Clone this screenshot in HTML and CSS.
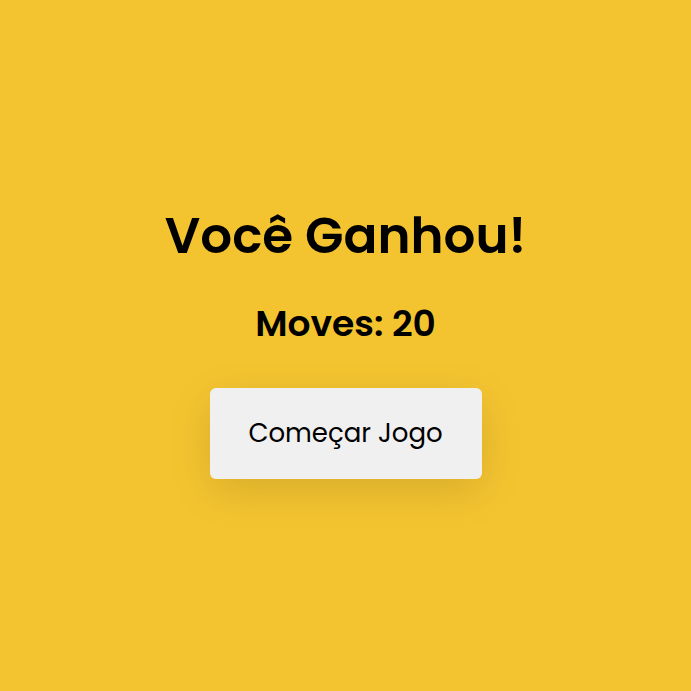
FILE: index.html
```html
<!DOCTYPE html>
<html lang="pt">
<head>
<meta charset="utf-8">
<title>Você Ganhou!</title>
<link rel="stylesheet" href="styles.css">
</head>
<body>
<main class="screen">
  <h1 class="title">Você Ganhou!</h1>
  <h2 class="moves">Moves: 20</h2>
  <button class="start">Começar Jogo</button>
</main>
</body>
</html>
```
FILE: styles.css
```css
* { box-sizing: border-box; }
html, body { margin: 0; padding: 0; }
body {
  background: #f4c430;
  font-family: Poppins, "Open Sans", "Noto Sans", sans-serif;
  color: #000;
}
.screen {
  height: 100vh;
  padding-bottom: 14px;
  display: flex;
  flex-direction: column;
  align-items: center;
  justify-content: center;
}
.title {
  margin: 0;
  font-size: 50px;
  font-weight: 600;
  line-height: 75px;
}
.moves {
  margin: 24px 0 0;
  font-size: 36px;
  font-weight: 600;
  line-height: 54px;
}
.start {
  margin-top: 37px;
  width: 272px;
  height: 91px;
  border: none;
  border-radius: 6px;
  background: #f0f0f0;
  font-family: inherit;
  font-size: 26px;
  color: #000;
  box-shadow: 0 12px 44px rgba(0,0,0,0.12);
}
```
